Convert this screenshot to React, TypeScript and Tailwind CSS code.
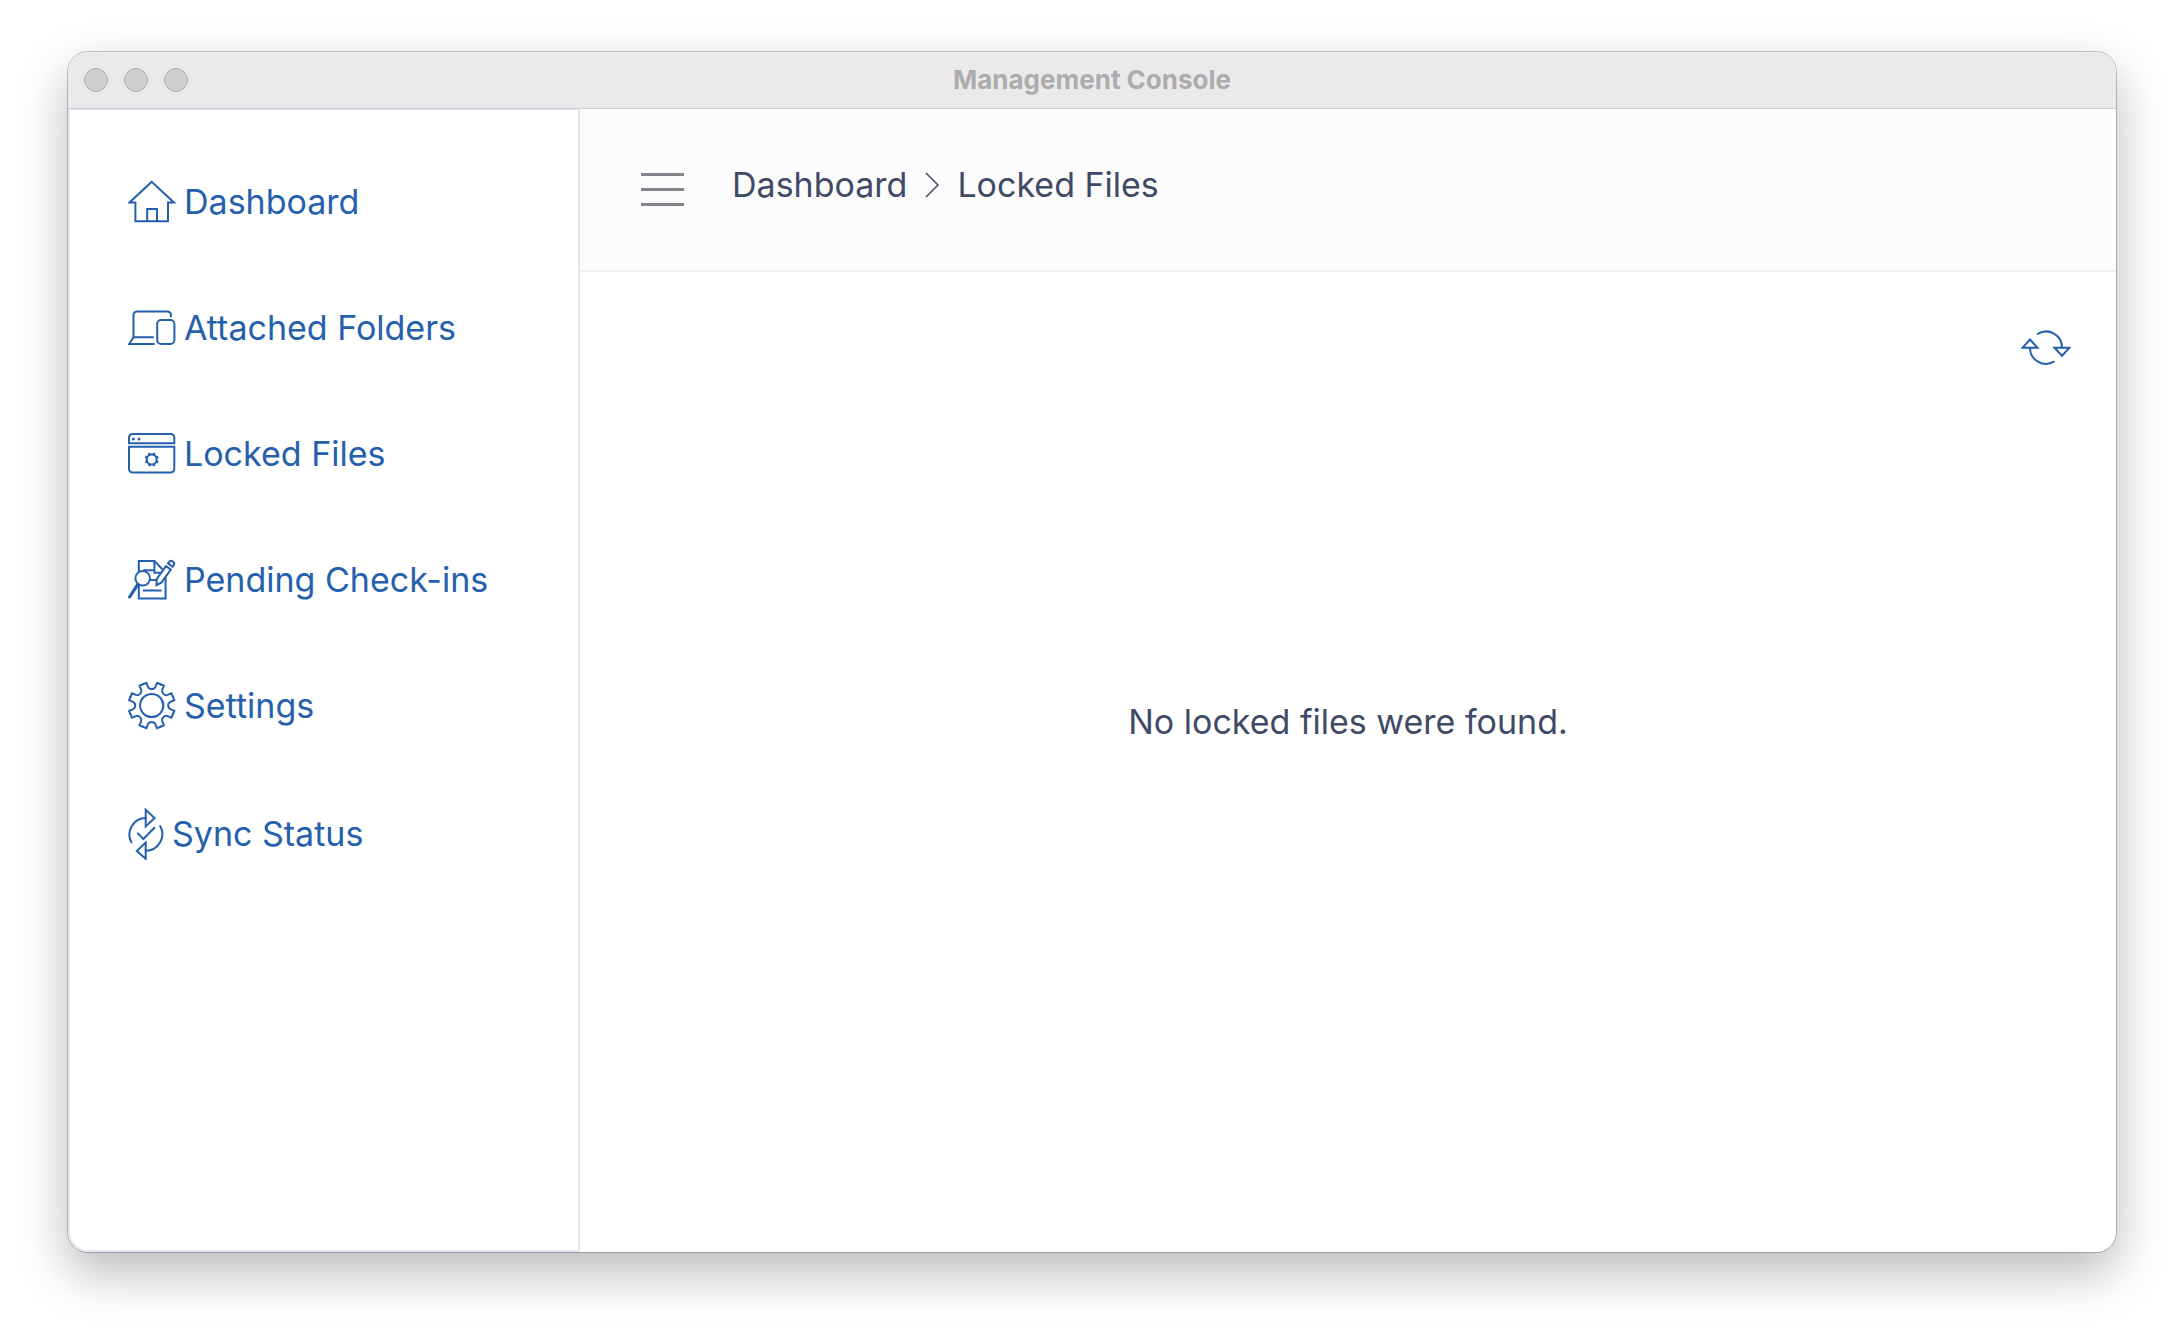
import type { ReactNode } from "react";

const GEAR_ANGLES = [0, 45, 90, 135, 180, 225, 270, 315];

function Icon({ children }: { children: ReactNode }) {
  return (
    <svg
      viewBox="0 0 48 48"
      className="size-12 shrink-0"
      fill="none"
      stroke="currentColor"
      strokeWidth="2"
      aria-hidden="true"
    >
      {children}
    </svg>
  );
}

function HomeIcon() {
  return (
    <Icon>
      <path d="M23.7 3.8 1.6 24.4h5.8v18.9H40V24.4h5.9z" />
      <path d="M19.2 43.3V31h9.8v12.3" />
    </Icon>
  );
}

function DevicesIcon() {
  return (
    <Icon>
      <path d="M43 12.9v-2a3.5 3.5 0 0 0-3.5-3.5H9a3.5 3.5 0 0 0-3.5 3.5v22.4h20.3" />
      <path d="M5.5 33.3 1.2 40h25.4" />
      <rect x="29.2" y="16" width="17.2" height="24" rx="4" />
    </Icon>
  );
}

function WindowIcon() {
  return (
    <Icon>
      <path d="M1 13.2V7.6A3.6 3.6 0 0 1 4.6 4h38.1a3.6 3.6 0 0 1 3.6 3.6v5.6z" />
      <path d="M1 16.8h45.3V39a3.6 3.6 0 0 1-3.6 3.6H4.6A3.6 3.6 0 0 1 1 39z" />
      <circle cx="5.4" cy="9" r="1.5" fill="currentColor" stroke="none" />
      <circle cx="11" cy="9" r="1.5" fill="currentColor" stroke="none" />
      <g transform="translate(23.7 29.5)">
        <circle r="4.9" />
        {GEAR_ANGLES.map((a) => (
          <path key={a} transform={`rotate(${a + 22.5})`} d="M0-5V-7" strokeWidth="2.6" />
        ))}
      </g>
    </Icon>
  );
}

function ReviewIcon() {
  return (
    <Icon>
      <path d="M10.8 16V4.9h15.6l8.2 8.6M26.4 4.9v11.8h6.2M37.6 21v21.4H10.8V29" />
      <path d="M15.3 14.2h10.6M22.3 24h5.6M15 34.4h18.6" />
      <circle cx="14.7" cy="22.3" r="7.3" />
      <path d="M9.8 28.4 1.6 41" strokeWidth="3.2" strokeLinecap="round" />
      <path d="m28.4 29.2.4-6.4L38 10.2l4.8 3.4-9.2 12.8z" />
      <path d="m40 7.4 1.4-1.8c.8-1 2-1 3-.4l1 .8c1 .8 1 2 .4 3l-1.2 1.8z" />
    </Icon>
  );
}

function GearIcon() {
  return (
    <Icon>
      <g transform="translate(23.7 23.5)" strokeLinecap="round">
        {GEAR_ANGLES.map((a) => (
          <path
            key={a}
            transform={`rotate(${a})`}
            d="M-8.8-21.2-5.3-22.6-3.7-18.7C-3-17.1-1.7-16.5 0-16.5S3-17.1 3.7-18.7L5.3-22.6 8.8-21.2"
          />
        ))}
        <circle r="11.6" />
      </g>
    </Icon>
  );
}

function SyncIcon() {
  return (
    <svg
      viewBox="0 0 36 52"
      className="h-13 w-9 shrink-0"
      fill="none"
      stroke="currentColor"
      strokeWidth="2"
      aria-hidden="true"
    >
      <path d="M17.7 1.8v16.6L26.6 10z" />
      <path d="M17.7 34.6v16.2L8.8 42.9z" />
      <g strokeLinecap="round">
        <path d="M17.7 10A16.6 16.6 0 0 0 3.4 34.4" />
        <path d="M17.7 42.7a16.6 16.6 0 0 0 14.5-24.7" />
        <path d="m9.8 25.4 5.6 5.6 11-11.2" />
      </g>
    </svg>
  );
}

function RefreshIcon() {
  return (
    <svg viewBox="0 0 50 36" className="h-9 w-[50px]" fill="none" stroke="currentColor" strokeWidth="2" aria-hidden="true">
      <path d="M1.6 17.7 9 9.6l7.5 8.1z" />
      <path d="m33.5 17.7 7.5 8.1 7.5-8.1z" />
      <path d="M16.8 3.8A16 16 0 0 1 41 17.7" strokeLinecap="round" />
      <path d="M9 17.7a16 16 0 0 0 23.8 14" strokeLinecap="round" />
    </svg>
  );
}

const navItems = [
  { label: "Dashboard", icon: <HomeIcon /> },
  { label: "Attached Folders", icon: <DevicesIcon /> },
  { label: "Locked Files", icon: <WindowIcon /> },
  { label: "Pending Check-ins", icon: <ReviewIcon /> },
  { label: "Settings", icon: <GearIcon /> },
  { label: "Sync Status", icon: <SyncIcon /> },
];

export default function App() {
  return (
    <div className="flex min-h-screen bg-white px-17 pt-13 pb-21 font-['Inter',sans-serif] text-[34px] leading-10">
      <div className="flex flex-1 flex-col overflow-hidden rounded-[20px] bg-white shadow-[0_0_0_1px_rgba(0,0,0,0.22),0_20px_50px_rgba(0,0,0,0.28)]">
        <div className="grid h-[57px] grid-cols-3 items-center border-b border-[#cfcdd0] bg-[#ece9ec] px-4">
          <div className="flex gap-4">
            <span className="size-6 rounded-full border border-[#b3b1b3] bg-[#d0ced0]" />
            <span className="size-6 rounded-full border border-[#b3b1b3] bg-[#d0ced0]" />
            <span className="size-6 rounded-full border border-[#b3b1b3] bg-[#d0ced0]" />
          </div>
          <h1 className="text-center text-[26px] leading-8 font-bold whitespace-nowrap text-[#adabad]">
            Management Console
          </h1>
        </div>

        <div className="flex flex-1">
          <nav className="w-1/4 rounded-bl-[20px] border-2 border-t border-[#dfe8f4] px-[58px] pt-17">
            <ul className="flex flex-col gap-[78px]">
              {navItems.map((item) => (
                <li key={item.label}>
                  <a href="#" className="flex items-center gap-2 whitespace-nowrap text-[#2560ad]">
                    {item.icon}
                    {item.label}
                  </a>
                </li>
              ))}
            </ul>
          </nav>

          <main className="flex flex-1 flex-col text-[#3f4b66]">
            <header className="flex h-[163px] items-start gap-12 border-b-2 border-[#eeeff0] bg-[#fcfcfc] px-[61px] pt-14">
              <button type="button" aria-label="Toggle menu" className="mt-2 flex flex-col gap-3">
                <span className="h-[3px] w-[43px] bg-[#85838c]" />
                <span className="h-[3px] w-[43px] bg-[#85838c]" />
                <span className="h-[3px] w-[43px] bg-[#85838c]" />
              </button>
              <div className="flex items-center gap-[18px] whitespace-nowrap">
                <a href="#">Dashboard</a>
                <svg viewBox="0 0 14 26" className="h-[26px] w-[14px]" fill="none" stroke="currentColor" strokeWidth="1.5" aria-hidden="true">
                  <path d="m1 1 12 12L1 25" />
                </svg>
                <span>Locked Files</span>
              </div>
            </header>

            <div className="flex justify-end px-[45px] pt-[58px]">
              <button type="button" aria-label="Refresh" className="text-[#2560ad]">
                <RefreshIcon />
              </button>
            </div>
            <p className="pt-[336px] text-center">No locked files were found.</p>
          </main>
        </div>
      </div>
    </div>
  );
}
